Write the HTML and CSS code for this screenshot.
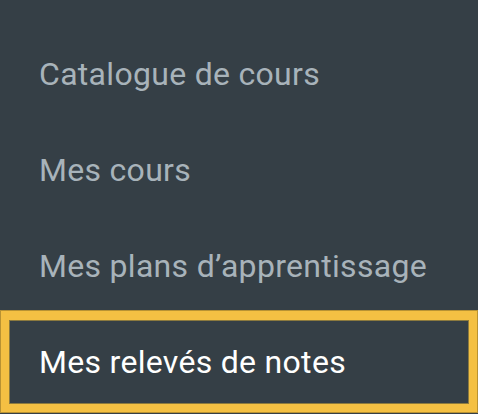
FILE: index.html
```html
<!DOCTYPE HTML>
<html>
    <head>
        <title>Menu</title>
        <meta charset="utf-8" />
        <meta name="viewport" content="width=device-width, initial-scale=1" />
        <link rel="stylesheet" href="styles.css">
    </head>
    <body>
        <nav class="menu">
            <a class="menu-item" href="#">Catalogue de cours</a>
            <a class="menu-item" href="#">Mes cours</a>
            <a class="menu-item" href="#">Mes plans d’apprentissage</a>
            <a class="menu-item focused" href="#">Mes relevés de notes</a>
        </nav>
    </body>
</html>
```

FILE: styles.css
```css
body {
    margin: 0;
    background-color: #353f46;
    font-family: Roboto, "Noto Sans", sans-serif;
}

.menu {
    display: flex;
    flex-direction: column;
    padding-top: 26px;
}

.menu-item {
    display: flex;
    align-items: center;
    height: 96px;
    padding-left: 39px;
    font-size: 32px;
    letter-spacing: 0.3px;
    color: #a8b3ba;
    text-decoration: none;
    white-space: nowrap;
}

.menu-item.focused {
    height: 84px;
    margin-top: -4px;
    padding-left: 30px;
    color: #ffffff;
    border: 9px solid #f4c043;
    border-top-width: 10px;
    outline: 1px solid #b89233;
    outline-offset: -1px;
    box-shadow: inset 0 0 0 1px #8c7a3e;
}
```
